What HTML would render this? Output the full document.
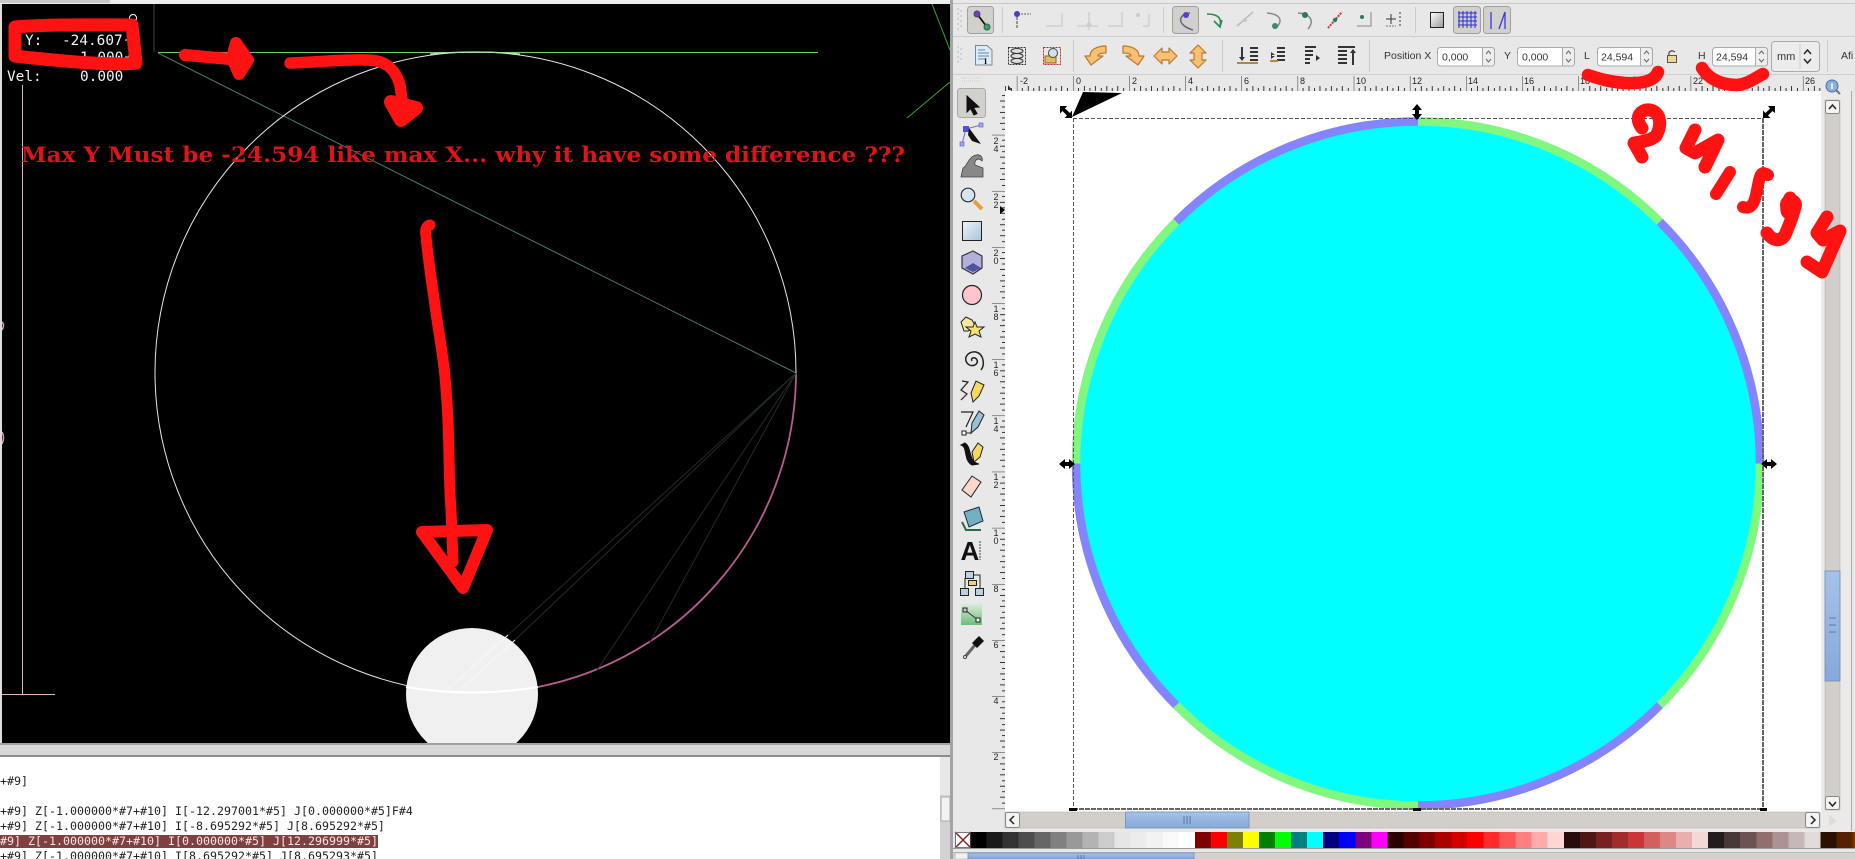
<!DOCTYPE html>
<html><head><meta charset="utf-8"><title>Screenshot</title>
<style>html,body{margin:0;padding:0;background:#e8e8e8;width:1855px;height:859px;overflow:hidden}svg{display:block}
.ui{font-family:"Liberation Sans",sans-serif;font-size:10.5px;fill:#333}
.rl{font-family:"Liberation Sans",sans-serif;font-size:9px;fill:#222}
.m{font-family:"DejaVu Sans Mono",monospace;font-size:11.63px;fill:#222}
.h{font-family:"DejaVu Sans Mono",monospace;font-size:14.4px;fill:#f4f4f4}
.r{fill:none;stroke:#ff1212;stroke-linecap:round;stroke-linejoin:round}
.rf{fill:#ff1212;stroke:#ff1212;stroke-linecap:round;stroke-linejoin:round}
.f{fill:none;stroke:#c4c4c4;stroke-width:1}
</style></head><body>
<svg width="1855" height="859" viewBox="0 0 1855 859" xmlns="http://www.w3.org/2000/svg">
<defs>
<linearGradient id="g1" x1="0" y1="0" x2="1" y2="1"><stop offset="0" stop-color="#eef4f8"/><stop offset="1" stop-color="#a6c3da"/></linearGradient>
<linearGradient id="g2" x1="0" y1="0" x2="1" y2="1"><stop offset="0" stop-color="#fff"/><stop offset="1" stop-color="#999"/></linearGradient>
<linearGradient id="g3" x1="0" y1="0" x2="0" y2="1"><stop offset="0" stop-color="#d8ecd8"/><stop offset="1" stop-color="#6cbc7c"/></linearGradient>
<linearGradient id="th" x1="0" y1="0" x2="0" y2="1"><stop offset="0" stop-color="#a6c2e8"/><stop offset="1" stop-color="#85a9da"/></linearGradient>
<pattern id="rt" patternUnits="userSpaceOnUse" x="1073" y="76" width="56.15" height="15">
<path shape-rendering="crispEdges" d="M0 0V15M5.6 12V15M11.2 10V15M16.8 12V15M22.5 10V15M28.1 12V15M33.7 10V15M39.3 12V15M44.9 10V15M50.5 12V15" stroke="#333" stroke-width="1" fill="none"/></pattern>
<pattern id="rv" patternUnits="userSpaceOnUse" x="990" y="808.6" width="15" height="56.15">
<path shape-rendering="crispEdges" d="M2 0H15M12 5.6H15M10 11.2H15M12 16.8H15M10 22.5H15M12 28.1H15M10 33.7H15M12 39.3H15M10 44.9H15M12 50.5H15" stroke="#333" stroke-width="1" fill="none"/></pattern>
<clipPath id="bl"><rect x="2" y="4" width="948" height="739"/></clipPath>
</defs>

<!-- LEFT WINDOW -->
<rect width="950" height="859" fill="#fff"/>
<rect width="950" height="4" fill="#eee"/><rect width="110" height="3" fill="#c8c8c8"/>
<rect x="0" y="4" width="2" height="745" fill="#ddd"/>
<rect x="2" y="4" width="948" height="739" fill="#000"/>
<g clip-path="url(#bl)">
<path d="M154 4V52" stroke="#444" fill="none"/>
<path d="M158 52.5H818" stroke="#70d070" fill="none"/>
<path d="M158 53L796 373" stroke="#4d7a6c" fill="none"/>
<circle cx="475.5" cy="372.5" r="320.5" fill="none" stroke="#e6e6e6" stroke-width="1"/>
<path d="M430 54Q475 50 520 54" fill="none" stroke="#a8e8a8" stroke-width="1.2"/>
<path d="M796 373A320.5 320.5 0 0 1 538 687" fill="none" stroke="#b85c90" stroke-width="1.8"/>
<path d="M796 373L508 635M796 373L515 640M796 373L597 670M796 373L650 642" stroke="#222b27" fill="none"/>
<circle cx="472" cy="694" r="66" fill="#f0f0f0"/>
<path d="M447 690L508 635M462 688L515 640" stroke="#f7f7f7" fill="none"/>
<path d="M406 687Q472 698 538 687" fill="none" stroke="#fff" stroke-width="2"/>
<path d="M22.5 85V694M2 694.5H55" stroke="#e4b8b8" fill="none"/>
<path d="M2 322Q5 325 2 330M2 432Q5 437 2 444" stroke="#d8a8b8" fill="none" stroke-width="1.5"/>
<path d="M932 4L950 50M950 82L907 118" stroke="#3fa03f" fill="none"/>
<text class="h" x="25" y="45">Y:</text>
<text class="h" x="62" y="45">-24.607</text>
<text class="h" x="80" y="62">1.000</text>
<text class="h" x="7" y="81">Vel:</text>
<text class="h" x="80" y="81">0.000</text>
<path d="M125 40H133M129 36V44M125 57H133M129 53V61" stroke="#fff" fill="none"/>
<circle cx="133" cy="18" r="3.5" fill="none" stroke="#fff"/>
<text x="21" y="162" font-family="'DejaVu Serif',serif" font-weight="bold" font-size="21.5" fill="#dd1418" textLength="884" lengthAdjust="spacingAndGlyphs">Max Y Must be -24.594 like max X... why it have some difference ???</text>
</g>
<rect x="0" y="743" width="950" height="13" fill="#d8d8d8"/>
<rect x="0" y="743" width="950" height="2" fill="#a0a0a0"/>
<rect x="0" y="755" width="950" height="2" fill="#8c8c8c"/>
<text class="m" x="0" y="785">+#9]</text>
<text class="m" x="0" y="815">+#9] Z[-1.000000*#7+#10] I[-12.297001*#5] J[0.000000*#5]F#4</text>
<text class="m" x="0" y="830">+#9] Z[-1.000000*#7+#10] I[-8.695292*#5] J[8.695292*#5]</text>
<rect x="0" y="835" width="378" height="13" fill="#804040"/>
<text class="m" x="0" y="845" style="fill:#f6e6e6">#9] Z[-1.000000*#7+#10] I[0.000000*#5] J[12.296999*#5]</text>
<text class="m" x="0" y="860">+#9] Z[-1.000000*#7+#10] I[8.695292*#5] J[8.695293*#5]</text>
<rect x="940" y="757" width="10" height="102" fill="#d4d2d0"/>
<rect x="940" y="757" width="10" height="38" fill="#e8e8e8"/>
<rect x="941" y="797" width="9" height="24" fill="#f2f2f2" stroke="#aaa"/>

<!-- RIGHT WINDOW -->
<rect x="950" y="0" width="905" height="859" fill="#e8e8e8"/>
<rect x="950" y="0" width="3" height="859" fill="#a4a4a4"/>
<rect x="953" y="3" width="902" height="1" fill="#c8c8c8"/>
<rect x="953" y="36" width="902" height="1" fill="#cfcfcf"/>
<rect x="953" y="74" width="902" height="1" fill="#cfcfcf"/>

<!-- canvas -->
<rect x="1005" y="91" width="816" height="721" fill="#fff"/>
<circle cx="1418" cy="463.5" r="342" fill="#00ffff"/>
<g fill="none" stroke-width="8.5">
<path stroke="#80f880" d="M1418 121.5A342 342 0 0 1 1659.8 221.7M1760 463.5A342 342 0 0 1 1659.8 705.3M1418 805.5A342 342 0 0 1 1176.2 705.3M1076 463.5A342 342 0 0 1 1176.2 221.7"/>
<path stroke="#8484ff" d="M1659.8 221.7A342 342 0 0 1 1760 463.5M1659.8 705.3A342 342 0 0 1 1418 805.5M1176.2 705.3A342 342 0 0 1 1076 463.5M1176.2 221.7A342 342 0 0 1 1418 121.5"/>
</g>
<path d="M1073 118.5H1763M1073.5 118V809" stroke="#555" stroke-dasharray="4 2" fill="none"/>
<path d="M1763 118V809M1073 809H1763" stroke="#666" stroke-width="2" stroke-dasharray="5 1" fill="none"/>
<path d="M1083 92L1122 93L1072 117Z" fill="#000"/>
<!-- handles -->
<g fill="#000" stroke="none">
<path d="M1060 106L1067 106L1065 108.5L1070 113L1072 110.5L1072 118L1064.5 118L1067 115.5L1062.5 111L1060 113.5Z"/>
<path d="M1417 104L1422 110H1419V114H1422L1417 120L1412 114H1415V110H1412Z"/>
<path d="M1775 106L1775 113L1772.5 111L1768 115.5L1770.5 118L1763 118L1763 110.5L1765.5 113L1770 108.5L1768 106Z"/>
<path d="M1059 464L1065 459V462H1069V459L1075 464L1069 469V466H1065V469Z"/>
<path d="M1761 464L1767 459V462H1771V459L1777 464L1771 469V466H1767V469Z"/>
<path d="M1069 808h8v3h-8zM1413 808h8v3h-8zM1760 808h7v3h-7z"/>
</g>

<!-- rulers -->
<rect x="1005" y="76" width="816" height="15" fill="#e8e8e8"/>
<rect x="1005" y="76" width="816" height="15" fill="url(#rt)"/>
<text class="rl" x="1020" y="84">-2</text>
<text class="rl" x="1076" y="84">0</text><text class="rl" x="1132" y="84">2</text><text class="rl" x="1188" y="84">4</text><text class="rl" x="1244" y="84">6</text><text class="rl" x="1300" y="84">8</text><text class="rl" x="1356" y="84">10</text><text class="rl" x="1412" y="84">12</text><text class="rl" x="1468" y="84">14</text><text class="rl" x="1524" y="84">16</text><text class="rl" x="1580" y="84">18</text><text class="rl" x="1636" y="84">20</text><text class="rl" x="1693" y="84">22</text><text class="rl" x="1749" y="84">24</text><text class="rl" x="1805" y="84">26</text>
<rect x="990" y="91" width="15" height="721" fill="#e8e8e8"/>
<rect x="990" y="91" width="15" height="721" fill="url(#rv)"/>
<g class="rl" text-anchor="middle">
<text class="rl" x="996" y="144">2</text><text class="rl" x="996" y="152">4</text>
<text class="rl" x="996" y="200">2</text><text class="rl" x="996" y="208">2</text>
<text class="rl" x="996" y="256">2</text><text class="rl" x="996" y="264">0</text>
<text class="rl" x="996" y="312">1</text><text class="rl" x="996" y="320">8</text>
<text class="rl" x="996" y="368">1</text><text class="rl" x="996" y="376">6</text>
<text class="rl" x="996" y="424">1</text><text class="rl" x="996" y="432">4</text>
<text class="rl" x="996" y="480">1</text><text class="rl" x="996" y="488">2</text>
<text class="rl" x="996" y="536">1</text><text class="rl" x="996" y="544">0</text>
<text class="rl" x="996" y="592">8</text>
<text class="rl" x="996" y="648">6</text>
<text class="rl" x="996" y="704">4</text>
<text class="rl" x="996" y="760">2</text>
</g>
<path d="M1000 206V214L1005 210Z" fill="#000"/>
<path d="M1008 85L1012 90H1008Z" fill="#333"/>

<!-- right scrollbar -->
<rect x="1821" y="91" width="31" height="740" fill="#eceae8"/>
<rect x="1825" y="100" width="15" height="710" fill="#d2cfcb" stroke="#a8a8a8" stroke-width=".5"/>
<rect x="1825.5" y="100.5" width="14" height="13" rx="2" fill="#f4f3f2" stroke="#888"/>
<path d="M1829 109L1832.5 105L1836 109" stroke="#222" stroke-width="1.5" fill="none"/>
<rect x="1825" y="571" width="15" height="110" fill="url(#th)" stroke="#6f8dbb" stroke-width=".8"/>
<path d="M1829 618H1836M1829 625H1836M1829 632H1836" stroke="#5a77a8" fill="none"/>
<rect x="1825.5" y="796.5" width="14" height="13" rx="2" fill="#f4f3f2" stroke="#888"/>
<path d="M1829 802L1832.5 806L1836 802" stroke="#222" stroke-width="1.5" fill="none"/>
<path d="M1829 815L1837 821L1829 826Z" fill="#dcdcdc"/>
<path d="M1851.5 91V831" stroke="#a8a8a8" fill="none"/>
<!-- info icon -->
<circle cx="1832" cy="86" r="6" fill="#8ab0e0" stroke="#5070a8"/><path d="M1832 83.5V89" stroke="#fff" stroke-width="1.6" fill="none"/><path d="M1836 90L1840 94" stroke="#777" stroke-width="2" fill="none"/>

<!-- bottom scrollbar -->
<rect x="1005" y="812" width="815" height="16" fill="#d2cfcb" stroke="#aaa" stroke-width=".5"/>
<rect x="1005.5" y="812.5" width="14" height="15" rx="2" fill="#f4f3f2" stroke="#888"/>
<path d="M1014 816L1010 820L1014 824" stroke="#222" stroke-width="1.5" fill="none"/>
<rect x="1805.5" y="812.5" width="14" height="15" rx="2" fill="#f4f3f2" stroke="#888"/>
<path d="M1811 816L1815 820L1811 824" stroke="#222" stroke-width="1.5" fill="none"/>
<rect x="1125.5" y="812" width="123.5" height="16" fill="url(#th)" stroke="#6f8dbb" stroke-width=".8"/>
<path d="M1184 816V824M1187 816V824M1190 816V824" stroke="#5a77a8" fill="none"/>

<!-- palette -->
<rect x="955" y="832" width="16" height="16" fill="#fff"/>
<path d="M955 832L971 848M971 832L955 848" stroke="#8a1a1a" stroke-width="1.4" fill="none"/>
<rect x="955.5" y="832.5" width="15" height="15" fill="none" stroke="#777"/>
<g transform="translate(970.3,832) scale(16.04,16)" shape-rendering="crispEdges">
<rect x="0" width="1.05" height="1" fill="#000"/><rect x="1" width="1.05" height="1" fill="#1a1a1a"/><rect x="2" width="1.05" height="1" fill="#333"/><rect x="3" width="1.05" height="1" fill="#4d4d4d"/><rect x="4" width="1.05" height="1" fill="#666"/><rect x="5" width="1.05" height="1" fill="#808080"/><rect x="6" width="1.05" height="1" fill="#999"/><rect x="7" width="1.05" height="1" fill="#b3b3b3"/><rect x="8" width="1.05" height="1" fill="#ccc"/><rect x="9" width="1.05" height="1" fill="#e6e6e6"/><rect x="10" width="1.05" height="1" fill="#ececec"/><rect x="11" width="1.05" height="1" fill="#f2f2f2"/><rect x="12" width="1.05" height="1" fill="#f9f9f9"/><rect x="13" width="1.05" height="1" fill="#fff"/>
<rect x="14" width="1.05" height="1" fill="#800000"/><rect x="15" width="1.05" height="1" fill="#f00"/><rect x="16" width="1.05" height="1" fill="#808000"/><rect x="17" width="1.05" height="1" fill="#ff0"/><rect x="18" width="1.05" height="1" fill="#008000"/><rect x="19" width="1.05" height="1" fill="#0f0"/><rect x="20" width="1.05" height="1" fill="#008080"/><rect x="21" width="1.05" height="1" fill="#0ff"/><rect x="22" width="1.05" height="1" fill="#000080"/><rect x="23" width="1.05" height="1" fill="#00f"/><rect x="24" width="1.05" height="1" fill="#800080"/><rect x="25" width="1.05" height="1" fill="#f0f"/>
<rect x="26" width="1.05" height="1" fill="#2b0000"/><rect x="27" width="1.05" height="1" fill="#500"/><rect x="28" width="1.05" height="1" fill="#800000"/><rect x="29" width="1.05" height="1" fill="#a00"/><rect x="30" width="1.05" height="1" fill="#d40000"/><rect x="31" width="1.05" height="1" fill="#f00"/><rect x="32" width="1.05" height="1" fill="#ff2a2a"/><rect x="33" width="1.05" height="1" fill="#f55"/><rect x="34" width="1.05" height="1" fill="#ff8080"/><rect x="35" width="1.05" height="1" fill="#faa"/><rect x="36" width="1.05" height="1" fill="#ffd5d5"/>
<rect x="37" width="1.05" height="1" fill="#280b0b"/><rect x="38" width="1.05" height="1" fill="#501616"/><rect x="39" width="1.05" height="1" fill="#782121"/><rect x="40" width="1.05" height="1" fill="#a02c2c"/><rect x="41" width="1.05" height="1" fill="#c83737"/><rect x="42" width="1.05" height="1" fill="#d35f5f"/><rect x="43" width="1.05" height="1" fill="#de8787"/><rect x="44" width="1.05" height="1" fill="#e9afaf"/><rect x="45" width="1.05" height="1" fill="#f4d7d7"/>
<rect x="46" width="1.05" height="1" fill="#241c1c"/><rect x="47" width="1.05" height="1" fill="#483737"/><rect x="48" width="1.05" height="1" fill="#6c5353"/><rect x="49" width="1.05" height="1" fill="#916f6f"/><rect x="50" width="1.05" height="1" fill="#ac9393"/><rect x="51" width="1.05" height="1" fill="#c8b7b7"/><rect x="52" width="1.05" height="1" fill="#e3dbdb"/>
<rect x="53" width="1.05" height="1" fill="#2b1100"/><rect x="54" width="1.05" height="1" fill="#520"/><rect x="55" width="1.05" height="1" fill="#803300"/>
</g>
<path d="M953 848.5H1855" stroke="#999" fill="none"/>
<path d="M953 852.5H1855" stroke="#bbb" fill="none"/>
<rect x="953" y="853" width="902" height="6" fill="#d4d1cd"/>
<rect x="955" y="853" width="13" height="6" fill="#f2f2f2" stroke="#999" stroke-width=".5"/>
<rect x="968" y="853" width="226" height="6" fill="url(#th)" stroke="#6f8dbb" stroke-width=".8"/>
<path d="M1078 855V859M1081 855V859M1084 855V859" stroke="#5a77a8" fill="none"/>

<!-- ROW 1 -->
<rect x="967.5" y="6.5" width="26" height="27" rx="3" fill="#d2d0cc" stroke="#a0a0a0"/>
<path d="M977 14L987 27" stroke="#111" stroke-width="1.8" fill="none"/>
<circle cx="977" cy="14" r="3" fill="#7a3ad0" stroke="#446"/><circle cx="987" cy="27" r="3" fill="#3aa070" stroke="#264"/>
<path d="M1002.5 7V33M1163.5 7V33M1415.5 7V33" stroke="#ccc" fill="none"/>
<path d="M958 8v2M958 13v2M958 18v2M958 23v2M958 28v2M961 10v2M961 15v2M961 20v2M961 25v2" stroke="#bbb" fill="none"/>
<path d="M1021 14H1031" stroke="#666" stroke-dasharray="2 1" fill="none"/><path d="M1017 17V28" stroke="#444" fill="none" stroke-dasharray="3 1"/><circle cx="1017" cy="14" r="3" fill="#4a3ad0"/>
<path class="f" d="M1046 26H1062V13M1077 26H1098M1089 12V30M1108 26H1122V12M1143 26H1149M1149 14V26"/><circle cx="1089" cy="25" r="2.5" fill="#ccc"/><circle cx="1138" cy="15" r="2" fill="#ccc"/>
<rect x="1172.5" y="6.5" width="26" height="27" rx="3" fill="#d2d0cc" stroke="#a0a0a0"/>
<path d="M1190 13C1178 14 1176 25 1193 30" fill="none" stroke="#667" stroke-width="1.5"/><circle cx="1186" cy="15" r="3" fill="#5a3ad0"/>
<path d="M1207 14C1218 14 1222 18 1220 26M1214 21L1220 27L1222 20" fill="none" stroke="#2a8a4a" stroke-width="1.6"/>
<path d="M1237 26L1253 12" stroke="#bbb" stroke-width="1.5" fill="none"/><circle cx="1245" cy="20" r="2" fill="#c4c4c4"/>
<path d="M1267 13C1280 14 1283 20 1277 27" fill="none" stroke="#888" stroke-width="1.5"/><circle cx="1275" cy="26" r="3" fill="#3a8a70"/>
<path d="M1298 13C1312 14 1314 22 1308 29" fill="none" stroke="#888" stroke-width="1.5"/><circle cx="1305" cy="15" r="3" fill="#2a7a60"/>
<path d="M1328 28L1342 12" stroke="#d03030" stroke-width="2" stroke-dasharray="2 1" fill="none"/><circle cx="1335" cy="20" r="2.2" fill="#2a7a60"/>
<path d="M1357 26H1371V12" fill="none" stroke="#888"/><circle cx="1362" cy="17" r="2" fill="#2a7a60"/>
<path d="M1386 19H1396M1391 14V24" stroke="#333" fill="none"/><path d="M1400 12V28" stroke="#333" stroke-dasharray="2 2" fill="none"/><path d="M1386 26H1396" stroke="#777" stroke-dasharray="2 1" fill="none"/>
<rect x="1430.5" y="12.5" width="13" height="15" fill="url(#g2)" stroke="#222"/>
<rect x="1453.5" y="6.5" width="27" height="27" rx="3" fill="#d2d0cc" stroke="#a0a0a0"/>
<path d="M1459 11V28M1463 11V28M1467 11V28M1471 11V28M1475 11V28M1458 13H1477M1458 17H1477M1458 21H1477M1458 25H1477" stroke="#2a2ad8" fill="none"/>
<rect x="1483.5" y="6.5" width="27" height="27" rx="3" fill="#d2d0cc" stroke="#a0a0a0"/>
<path d="M1491 12V29M1499 29L1505 12M1505 12V29" stroke="#3a3ae0" stroke-width="1.3" fill="none"/>

<!-- ROW 2 -->
<path d="M958 46v2M958 51v2M958 56v2M958 61v2M961 48v2M961 53v2M961 58v2" stroke="#bbb" fill="none"/>
<path d="M975.5 45.5H987L992 50V65H975.5Z" fill="#dfeaf6" stroke="#789"/>
<path d="M978 50H985M978 53H989M978 56H989M978 59H985" stroke="#5a8ac0" fill="none"/><text x="984" y="64" font-size="8" font-family="Liberation Serif,serif" font-weight="bold" fill="#111">I</text>
<rect x="1008.5" y="47.5" width="17" height="17" fill="none" stroke="#333" stroke-dasharray="2 1"/>
<ellipse cx="1017" cy="51" rx="6" ry="2.5" fill="#ddd" stroke="#333"/><ellipse cx="1017" cy="56" rx="6" ry="2.5" fill="#ddd" stroke="#333"/><ellipse cx="1017" cy="61" rx="6" ry="2.5" fill="#ddd" stroke="#333"/>
<rect x="1043.5" y="47.5" width="17" height="17" fill="none" stroke="#b03030" stroke-dasharray="2 1"/>
<path d="M1045 56H1056V63H1045Z" fill="#e8b860" stroke="#8a6a20"/><circle cx="1053" cy="53" r="4.5" fill="#cfe0f0" stroke="#444"/>
<path d="M1073.5 40V72M1222.5 40V72M1369.5 40V72M1827.5 40V72" stroke="#ccc" fill="none"/>
<g fill="#f8c070" stroke="#b87a30" stroke-width="1.2" stroke-linejoin="round">
<path d="M1091 65L1085 56H1090C1090 50 1096 46 1106 46V53C1100 53 1098 54 1098 56H1103Z"/>
<path d="M1138 65L1144 56H1139C1139 50 1133 46 1123 46V53C1129 53 1131 54 1131 56H1126Z"/>
<path d="M1154 56L1162 48V52H1169V48L1177 56L1169 64V60H1162V64Z"/>
<path d="M1198 45L1206 53H1202V60H1206L1198 68L1190 60H1194V53H1190Z"/>
</g>
<g fill="#333" stroke="none">
<path d="M1250 47h8v2h-8zM1250 51h8v2h-8zM1250 55h8v2h-8zM1250 59h8v2h-8zM1241 47h2v10h2l-3 4l-3-4h2z"/><rect x="1237" y="62" width="21" height="2" fill="#b08a3a"/>
<path d="M1277 47h8v2h-8zM1277 51h8v2h-8zM1277 55h8v2h-8zM1277 59h8v2h-8zM1271 52l4 3h-3v1h3l-4 3z"/><rect x="1270" y="60" width="8" height="2" fill="#b08a3a"/>
<path d="M1305 46h11v2h-11zM1305 50h8v2h-8zM1305 54h8v2h-8zM1305 58h5v2h-5zM1305 62h5v2h-5zM1316 55l4 3-4 3z"/>
<path d="M1338 46h17v2h-17zM1338 50h9v2h-9zM1338 54h9v2h-9zM1338 58h9v2h-9zM1338 62h9v2h-9zM1352 50h2v15h-2zM1353 49l3 4h-6z"/>
</g>
<text class="ui" x="1384" y="59">Position X</text>
<text class="ui" x="1504" y="59">Y</text>
<text class="ui" x="1584" y="59">L</text>
<text class="ui" x="1698" y="59">H</text>
<text class="ui" x="1841" y="59">Afi</text>
<g fill="#fff" stroke="#aaa">
<rect x="1437.5" y="47.5" width="57" height="18.5" rx="3"/>
<rect x="1517.5" y="47.5" width="57" height="18.5" rx="3"/>
<rect x="1597.5" y="47.5" width="55" height="18.5" rx="3"/>
<rect x="1712.5" y="47.5" width="55" height="18.5" rx="3"/>
</g>
<g fill="#eee" stroke="#aaa">
<path d="M1482.5 47.5H1491.5Q1494.5 47.5 1494.5 50.5V63Q1494.5 66 1491.5 66H1482.5Z"/>
<path d="M1562.5 47.5H1571.5Q1574.5 47.5 1574.5 50.5V63Q1574.5 66 1571.5 66H1562.5Z"/>
<path d="M1640.5 47.5H1649.5Q1652.5 47.5 1652.5 50.5V63Q1652.5 66 1649.5 66H1640.5Z"/>
<path d="M1755.5 47.5H1764.5Q1767.5 47.5 1767.5 50.5V63Q1767.5 66 1764.5 66H1755.5Z"/>
</g>
<path d="M1486 54L1488.5 51L1491 54M1486 59L1488.5 62L1491 59M1566 54L1568.5 51L1571 54M1566 59L1568.5 62L1571 59M1644 54L1646.5 51L1649 54M1644 59L1646.5 62L1649 59M1759 54L1761.5 51L1764 54M1759 59L1761.5 62L1764 59" stroke="#666" fill="none"/>
<text class="ui" x="1442" y="60.5">0,000</text>
<text class="ui" x="1522" y="60.5">0,000</text>
<text class="ui" x="1601" y="60.5">24,594</text>
<text class="ui" x="1716" y="60.5">24,594</text>
<rect x="1667.5" y="55.5" width="9" height="7" fill="#e8d890" stroke="#555"/><path d="M1669 55V52.5Q1671.5 49.5 1675 52" fill="none" stroke="#555" stroke-width="1.3"/>
<rect x="1771.5" y="41.5" width="48" height="30" rx="3" fill="#ececec" stroke="#aaa"/>
<path d="M1800 44V69" stroke="#ccc" fill="none"/>
<text class="ui" x="1777" y="60" style="font-size:11px">mm</text>
<path d="M1804 54L1807.5 50L1811 54M1804 59L1807.5 63L1811 59" stroke="#222" stroke-width="1.4" fill="none"/>

<!-- TOOLS -->
<path d="M962 78H982M962 81H982" stroke="#ccc" stroke-dasharray="1 1" fill="none"/>
<rect x="957.5" y="88.5" width="28" height="29" rx="3" fill="#d2d0cc" stroke="#a8a8a8"/>
<path d="M967 96V112L970.5 108.5L974 115L977 113.5L973.5 107.5L979 107Z" fill="#111" stroke="#111"/>
<!-- node -->
<path d="M966 129L981 125M966 129L962 144" stroke="#6a6ae0" fill="none"/>
<rect x="963" y="126" width="6" height="6" fill="#5050e0"/><rect x="979" y="123" width="4" height="4" fill="#a8a8f0" stroke="#5050d0" stroke-width=".6"/><rect x="960" y="142" width="4" height="4" fill="#a8a8f0" stroke="#5050d0" stroke-width=".6"/>
<path d="M969 128L981 144L972 141L968 135Z" fill="#111"/>
<!-- tweak -->
<path d="M961 177L963 168C967 167 968 157 976 155C981 154 983 158 982 161C978 157 974 160 975 165L983 168V177Z" fill="#888" stroke="#444" stroke-width=".8"/>
<!-- zoom -->
<circle cx="968" cy="195" r="6.8" fill="#d4e4f2" stroke="#333" stroke-width="1.2"/><path d="M974 201L982 209" stroke="#e8a030" stroke-width="4" fill="none"/>
<!-- rect -->
<rect x="962.5" y="221.5" width="19" height="19" fill="url(#g1)" stroke="#222"/>
<!-- 3d -->
<path d="M973 251L982 256V268L973 274L962 268V256Z" fill="#b0b0d8" stroke="#334" stroke-width="1.2"/><path d="M965 268L973 263L981 268L973 272Z" fill="#5050a0"/>
<!-- ellipse -->
<circle cx="972" cy="295" r="9.5" fill="#ffc4cc" stroke="#222" stroke-width="1.2"/>
<!-- star -->
<path d="M961 322L966 317L972 320L976 327L968 331L964 331Z" fill="#f4e8a0" stroke="#222"/><path d="M975 322L977 327L984 327L979 331L981 337L975 334L969 337L971 331L966 327L973 327Z" fill="#f6e078" stroke="#222"/>
<!-- spiral -->
<path d="M972 361C970 358 975 356 977 360C979 365 971 368 967 363C963 357 969 351 976 352C984 354 985 365 981 370" fill="none" stroke="#222" stroke-width="1.5"/>
<!-- pencil -->
<path d="M962 381L968 382L961 390L967 394L961 400" fill="none" stroke="#222" stroke-width="1.2"/><path d="M973 402L971 393L976 381L984 385L979 396Z" fill="#f4d860" stroke="#222"/>
<!-- pen -->
<path d="M961 412H973L966 427" fill="none" stroke="#222" stroke-width="1.2"/><rect x="962" y="431" width="4" height="4" fill="#fff" stroke="#222"/><path d="M966 433H972" stroke="#222" fill="none"/><path d="M971 433L972 423L979 411L984 415L978 427Z" fill="#98c0d8" stroke="#222"/>
<!-- callig -->
<path d="M961 445C968 447 963 460 972 465L979 464C968 462 972 447 965 443Z" fill="#111" stroke="#111"/><path d="M974 462L972 452L978 443L983 447L980 457Z" fill="#f4d860" stroke="#222"/>
<!-- eraser -->
<path d="M962 490L972 476L981 482L971 497Z" fill="#f8d8c8" stroke="#222"/>
<!-- bucket -->
<path d="M964 512L979 507L983 521L969 527Z" fill="#70b0c0" stroke="#224"/><path d="M962 522L966 530H981" fill="none" stroke="#2a6a4a" stroke-width="2"/>
<!-- text -->
<text x="960.5" y="560" font-family="Liberation Sans,sans-serif" font-weight="bold" font-size="26" fill="#111">A</text>
<path d="M980 541V560" stroke="#444" stroke-dasharray="2 1" fill="none"/>
<!-- connector -->
<rect x="965.5" y="571.5" width="8" height="7" fill="#bcd0e0" stroke="#222"/><rect x="960.5" y="588.5" width="8" height="7" fill="#bcd0e0" stroke="#222"/><rect x="975.5" y="588.5" width="8" height="7" fill="#bcd0e0" stroke="#222"/><rect x="968.5" y="580.5" width="8" height="5" fill="#f0d080" stroke="#222"/><path d="M965 578V588M974 575H980V588" stroke="#222" fill="none"/>
<!-- gradient -->
<rect x="961" y="604" width="21" height="21" fill="url(#g3)"/><path d="M965 610L978 620" stroke="#333" fill="none"/><rect x="963" y="608" width="4" height="4" fill="#ccc" stroke="#222"/><rect x="976" y="618" width="4" height="4" fill="#fff" stroke="#222"/>
<!-- dropper -->
<path d="M965 657L975 645" stroke="#666" stroke-width="3" fill="none"/><path d="M972 643L979 636L984 641L977 648Z" fill="#111"/><circle cx="965" cy="657" r="1.5" fill="#fff" stroke="#444"/>

<!-- RED ANNOTATIONS -->
<path class="r" stroke-width="13" d="M15 27C50 24 100 25 132 25L136 63C110 66 50 60 15 56Z"/>
<path class="r" stroke-width="12" d="M185 55L240 60"/>
<path class="rf" stroke-width="12" d="M236 43L248 60L239 74L232 58Z"/>
<path class="r" stroke-width="11.5" d="M290 63C320 62 345 59 367 60C385 60 395 68 400 85L403 107"/>
<path class="rf" stroke-width="14" d="M391 102L416 108L401 120Z"/>
<path class="r" stroke-width="11" d="M430 225C426 226 425 230 426 236C428 260 433 290 437 320C441 345 445 370 446 390C450 430 448 470 451 510L453 562"/>
<path class="r" stroke-width="12" d="M422 532L487 530L463 588Z"/>
<path class="r" stroke-width="12.5" d="M1588 75C1600 79 1610 82 1625 83C1645 84 1655 80 1658 72"/>
<path class="r" stroke-width="12.5" d="M1702 68C1708 78 1720 85 1737 85C1748 84 1755 78 1763 74"/>
<path class="r" stroke-width="13" d="M1642 128C1634 118 1640 109 1650 110C1661 112 1662 125 1656 136C1650 141 1640 142 1634 143L1642 157"/>
<path class="r" stroke-width="13" d="M1695 130L1686 148L1695 153L1718 140L1705 167"/>
<path class="r" stroke-width="12" d="M1730 172L1716 194"/>
<path class="r" stroke-width="12" d="M1768 175C1760 170 1760 176 1757 190C1755 202 1752 210 1743 207"/>
<path class="r" stroke-width="13" d="M1790 198C1785 208 1786 218 1793 210L1795 206C1794 214 1788 228 1785 235C1780 243 1772 240 1767 233"/>
<circle cx="1791" cy="205" r="11" fill="#ff1212"/>
<path class="r" stroke-width="13" d="M1827 217L1817 233L1823 240L1840 231L1822 272L1807 262"/>
</svg>
</body></html>
